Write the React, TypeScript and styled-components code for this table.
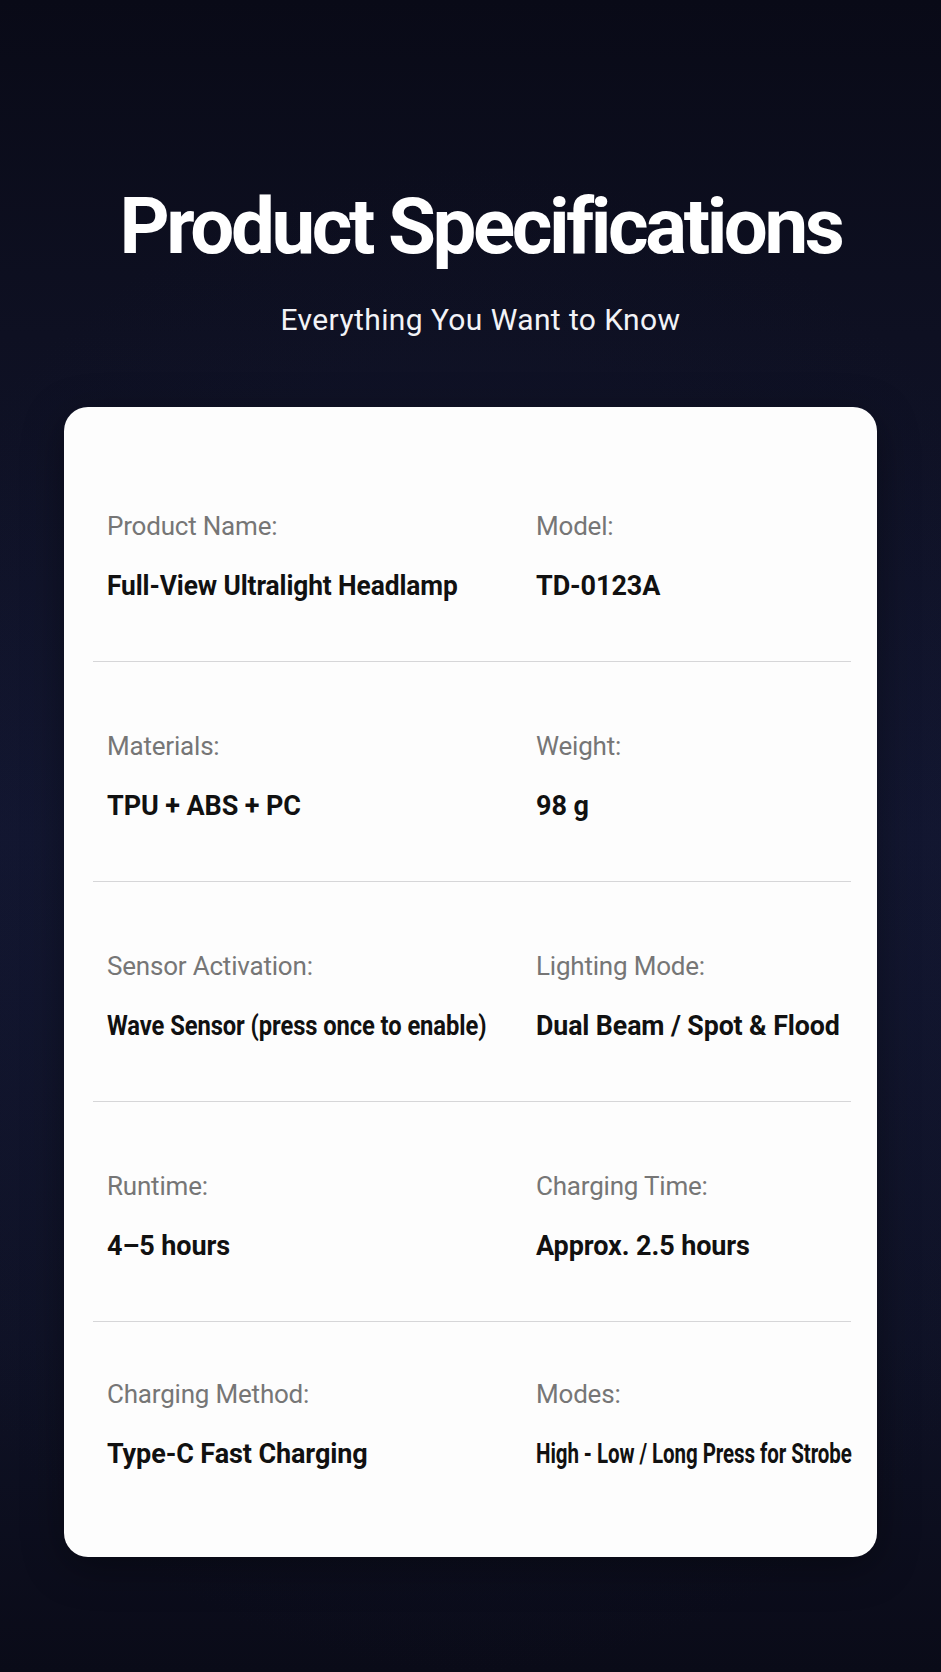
import React from "react";
import styled, { createGlobalStyle } from "styled-components";

const Global = createGlobalStyle`
  html, body {
    margin: 0;
    padding: 0;
    background: #0a0b18;
  }
  body {
    font-family: Roboto, "Liberation Sans", Arial, sans-serif;
    -webkit-font-smoothing: antialiased;
  }
`;

const Page = styled.main`
  min-height: 1672px;
  box-sizing: border-box;
  padding: 188px 64px 116px;
  display: flex;
  flex-direction: column;
  align-items: stretch;
  background:
    radial-gradient(ellipse 70% 45% at 50% 55%, rgba(36, 44, 86, 0.5) 0%, rgba(20, 24, 50, 0.2) 60%, rgba(10, 11, 24, 0) 100%),
    linear-gradient(180deg, #090a17 0%, #0e1022 20%, #121630 50%, #0f1226 80%, #0a0b18 100%);
`;

const Header = styled.header`
  display: flex;
  flex-direction: column;
  align-items: center;
  padding-left: 20px;
  margin-bottom: 69px;
`;

const Title = styled.h1`
  margin: 0;
  font-size: 78px;
  line-height: 78px;
  font-weight: 700;
  letter-spacing: -3.4px;
  color: #ffffff;
  white-space: nowrap;
`;

const Subtitle = styled.p`
  margin: 36px 0 0;
  font-size: 30px;
  line-height: 36px;
  font-weight: 400;
  letter-spacing: 0.4px;
  color: #f2f3f7;
  white-space: nowrap;
`;

const Card = styled.section`
  background: #fdfdfd;
  border-radius: 24px;
  padding: 35px 26px 28px 29px;
  box-shadow: 0 10px 40px rgba(0, 0, 0, 0.35);
`;

const Row = styled.div<{ $last?: boolean }>`
  display: grid;
  grid-template-columns: 429px 1fr;
  padding: ${(p) => (p.$last ? "55px" : "67px")} 0 58px 14px;
  border-bottom: ${(p) => (p.$last ? "none" : "1px solid #d6d6d8")};
`;

const Cell = styled.div`
  display: flex;
  flex-direction: column;
  gap: 26px;
  min-width: 0;
`;

const Label = styled.span`
  font-size: 26px;
  line-height: 34px;
  font-weight: 400;
  letter-spacing: -0.2px;
  color: #767676;
  white-space: nowrap;
`;

const Value = styled.span<{ $squeeze?: number }>`
  display: inline-block;
  font-size: 27px;
  line-height: 34px;
  font-weight: 700;
  letter-spacing: -0.1px;
  color: #111111;
  white-space: nowrap;
  transform-origin: left center;
  transform: ${(p) => (p.$squeeze ? `scaleX(${p.$squeeze})` : "none")};
`;

type Spec = { label: string; value: string; squeeze?: number };

const rows: [Spec, Spec][] = [
  [
    { label: "Product Name:", value: "Full-View Ultralight Headlamp", squeeze: 0.975 },
    { label: "Model:", value: "TD-0123A" },
  ],
  [
    { label: "Materials:", value: "TPU + ABS + PC" },
    { label: "Weight:", value: "98 g" },
  ],
  [
    { label: "Sensor Activation:", value: "Wave Sensor (press once to enable)", squeeze: 0.88 },
    { label: "Lighting Mode:", value: "Dual Beam / Spot & Flood", squeeze: 0.99 },
  ],
  [
    { label: "Runtime:", value: "4–5 hours" },
    { label: "Charging Time:", value: "Approx. 2.5 hours" },
  ],
  [
    { label: "Charging Method:", value: "Type-C Fast Charging" },
    { label: "Modes:", value: "High - Low / Long Press for Strobe", squeeze: 0.76 },
  ],
];

export default function App() {
  return (
    <>
      <Global />
      <Page>
        <Header>
          <Title>Product Specifications</Title>
          <Subtitle>Everything You Want to Know</Subtitle>
        </Header>
        <Card>
          {rows.map((pair, i) => (
            <Row key={i} $last={i === rows.length - 1}>
              {pair.map((s) => (
                <Cell key={s.label}>
                  <Label>{s.label}</Label>
                  <Value $squeeze={s.squeeze}>{s.value}</Value>
                </Cell>
              ))}
            </Row>
          ))}
        </Card>
      </Page>
    </>
  );
}
